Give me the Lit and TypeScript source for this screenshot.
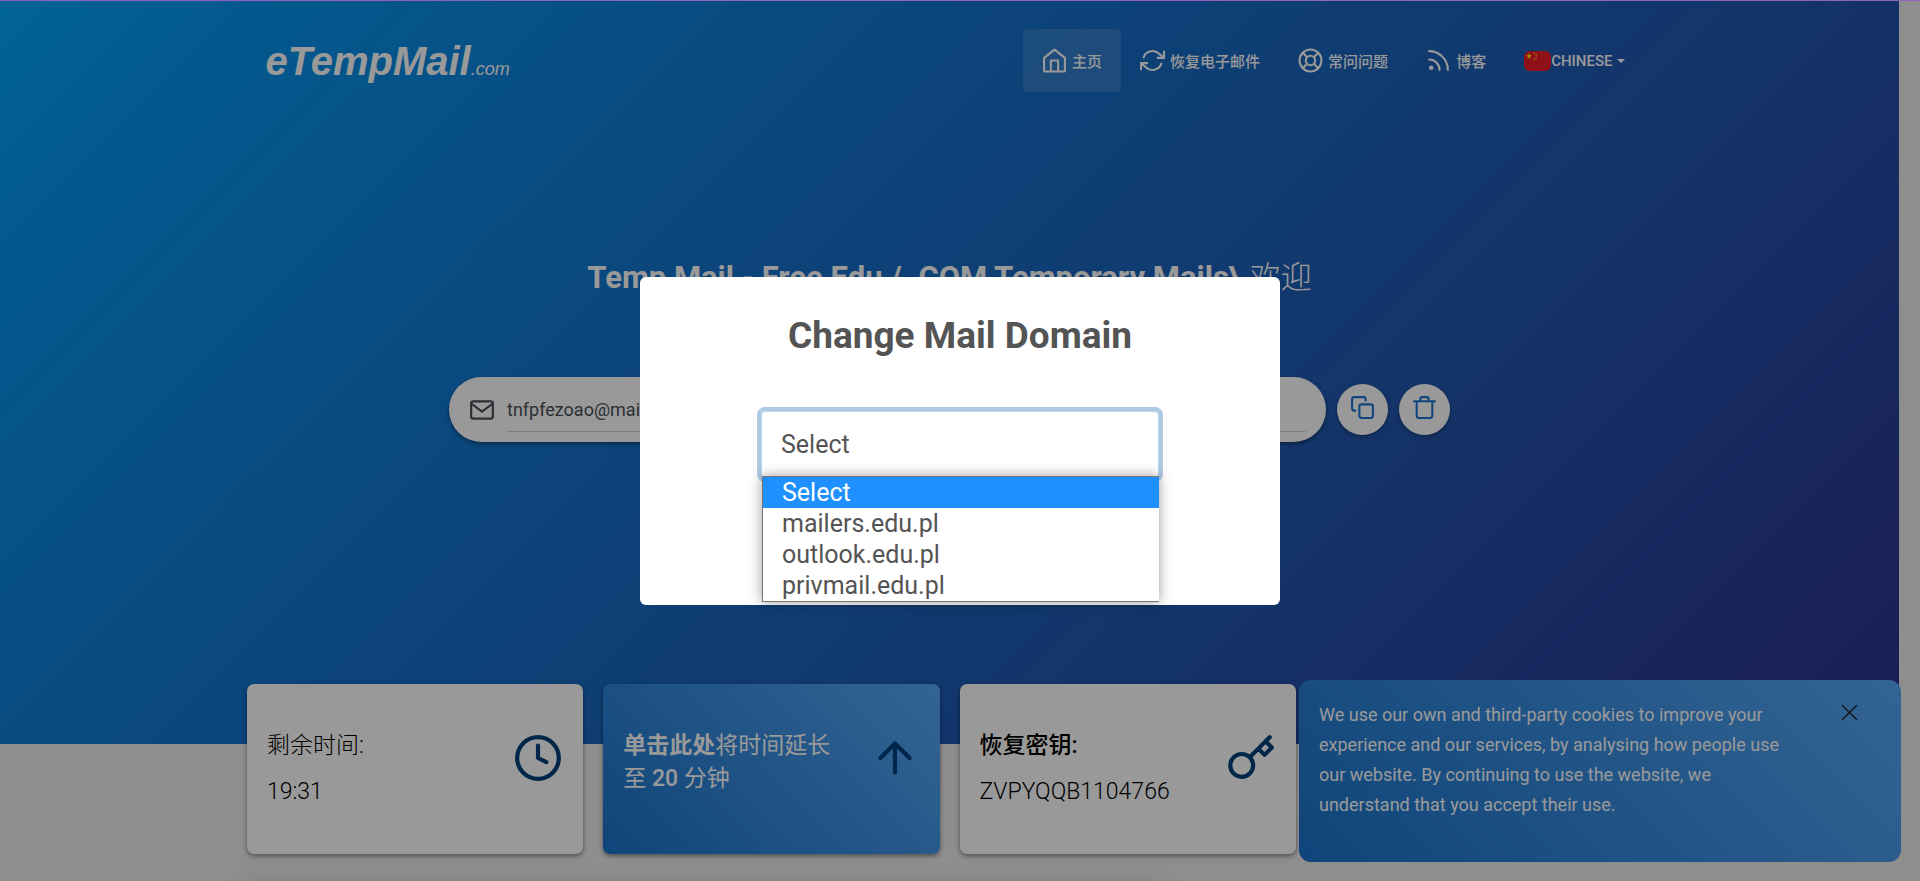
import { LitElement, html, css, svg } from "lit";
import { customElement, state } from "lit/decorators.js";

const icon = (body: unknown, cls: string, viewBox = "0 0 24 24") =>
  html`<svg class="icon ${cls}" viewBox=${viewBox} aria-hidden="true">${body}</svg>`;

const home = svg`<path d="M2 9.500 12 1.500l10 8V21a1.500 1.500 0 0 1-1.500 1.500h-17A1.500 1.500 0 0 1 2 21z"/><path d="M8.500 22.500V12h7v10.500"/>`;
const refresh = svg`<path d="M23 3.500v6h-6M1 20.500v-6h6"/><path d="M3.500 9a9 9 0 0 1 14.900-3.400L23 9.500M1 14.500l4.600 3.900A9 9 0 0 0 20.500 15"/>`;
const buoy = svg`<circle cx="12" cy="12" r="10.500"/><circle cx="12" cy="12" r="4.500"/><path d="m4.600 4.600 4.200 4.200M15.200 15.200l4.200 4.200M15.200 8.800l4.200-4.200M4.600 19.400l4.200-4.200"/>`;
const rss = svg`<path d="M3 11a10 10 0 0 1 10 10M3 3a18 18 0 0 1 18 18"/><circle cx="5" cy="19" r="1.200"/>`;
const mail = svg`<rect x="2" y="4" width="20" height="16" rx="2"/><path d="m2 6 10 7.500L22 6"/>`;
const copy = svg`<rect x="9" y="9" width="13" height="13" rx="2"/><path d="M5 15H4a2 2 0 0 1-2-2V4a2 2 0 0 1 2-2h9a2 2 0 0 1 2 2v1.500"/>`;
const trash = svg`<path d="M2 6h20M19.500 6v14a2 2 0 0 1-2 2h-11a2 2 0 0 1-2-2V6M8 6V4a2 2 0 0 1 2-2h4a2 2 0 0 1 2 2v2"/>`;
const clock = svg`<circle cx="12" cy="12" r="10"/><path d="M12 6v6l4 2"/>`;
const arrow = svg`<path d="M12 19V5M5 12l7-7 7 7"/>`;
const key = svg`<path d="m21 2-2 2m-7.610 7.610a5.500 5.500 0 1 1-7.778 7.778 5.500 5.500 0 0 1 7.777-7.777zm0 0L15.500 7.500m0 0 3 3L22 7l-3-3m-3.500 3.500L19 4"/>`;

@customElement("app-root")
export class AppRoot extends LitElement {
  @state() private domain = "Select";

  private domains = ["Select", "mailers.edu.pl", "outlook.edu.pl", "privmail.edu.pl"];

  static styles = css`
    :host {
      display: block;
      position: relative;
      height: 100vh;
      overflow: hidden;
      background: #ededed;
      font-family: Roboto, "Noto Sans CJK SC", sans-serif;
      font-size: 16px;
      color: #212529;
    }
    *, *::before, *::after { box-sizing: border-box; }
    a { color: inherit; text-decoration: none; }
    button { font: inherit; border: 0; padding: 0; cursor: pointer; }
    h1, h2, p { margin: 0; }
    .icon {
      display: block;
      flex: none;
      fill: none;
      stroke: currentColor;
      stroke-width: 2;
      stroke-linecap: round;
      stroke-linejoin: round;
    }
    .page { padding-right: 21px; }
    .hero {
      height: 744px;
      padding-top: 29px;
      background: linear-gradient(135deg, #00a6fa 0%, #0694ee 10%, #1471cb 39%, #2157af 68%, #2d308c 100%);
    }
    .bar {
      display: flex;
      align-items: center;
      justify-content: space-between;
      width: 1400px;
      max-width: 100%;
      height: 63px;
      margin: 0 auto;
      padding: 0 6px 0 16px;
    }
    .brand {
      color: #fff;
      font-family: "Liberation Sans", sans-serif;
      font-style: italic;
      font-weight: 700;
      font-size: 40px;
      line-height: 60px;
    }
    .brand small { font-size: 18px; line-height: 20px; font-weight: 400; }
    .menu {
      display: flex;
      list-style: none;
      margin: 0;
      padding: 0;
      color: #fff;
      font-size: 15px;
      font-weight: 500;
    }
    .menu a {
      display: flex;
      align-items: center;
      gap: 5px;
      height: 63px;
      padding: 0 19px;
      border-radius: 4px;
    }
    .menu .current { background: rgba(255, 255, 255, 0.12); }
    .menu .lang { gap: 0; }
    .menu-icon { width: 25px; height: 25px; }
    .flag { width: 27px; height: 20px; border-radius: 6px; }
    .caret {
      margin-left: 4px;
      border: 4px solid transparent;
      border-top-color: currentColor;
      border-bottom: 0;
    }
    .title {
      margin-top: 164px;
      text-align: center;
      color: #fff;
      font-size: 31px;
      line-height: 44px;
      font-weight: 700;
    }
    .title span { font-weight: 300; }
    .address {
      display: flex;
      justify-content: center;
      align-items: center;
      gap: 11px;
      margin-top: 77px;
    }
    .field {
      display: flex;
      align-items: center;
      gap: 12px;
      width: 877px;
      height: 65px;
      padding: 0 20px;
      border-radius: 33px;
      background: #fff;
      color: #4a5058;
      box-shadow: 0 2px 4px rgba(0, 0, 0, 0.4);
    }
    .field input {
      flex: 1;
      min-width: 0;
      height: 44px;
      border: 0;
      border-bottom: 1px solid #ced4da;
      padding: 0;
      background: none;
      color: #495057;
      font: 18px/24px Roboto, sans-serif;
      outline: 0;
    }
    .mail-icon { width: 26px; height: 26px; }
    .round {
      display: grid;
      place-items: center;
      width: 51px;
      height: 51px;
      padding-bottom: 5px;
      border-radius: 50%;
      background: #fff;
      color: #1a75cf;
      box-shadow: 0 2px 4px rgba(0, 0, 0, 0.3);
    }
    .tool-icon { width: 25px; height: 25px; }
    .cards {
      display: grid;
      grid-template-columns: repeat(4, 1fr);
      gap: 20px;
      width: 1405px;
      max-width: 100%;
      margin: -60px auto 0;
    }
    .card {
      display: flex;
      justify-content: space-between;
      height: 170px;
      padding: 45px 20px 0;
      border-radius: 7px;
      background: #fff;
      box-shadow: 0 2px 5px rgba(0, 0, 0, 0.45);
      font-size: 23px;
      font-weight: 300;
      line-height: 33px;
      text-align: left;
      color: #000;
    }
    .card p + p { margin-top: 13px; }
    .card.extend {
      background: linear-gradient(45deg, #1a73cc, #56a7f5);
      color: #fff;
      font-weight: 400;
    }
    .card .bold { font-weight: 700; }
    .card .medium { font-weight: 500; }
    .card-icon { width: 50px; height: 50px; margin-top: 4px; color: #00407c; }
    .inbox {
      width: 911px;
      height: 400px;
      margin: 32px 0 0 248px;
      background: #fff;
      box-shadow: 0 0 24px rgba(0, 0, 0, 0.15);
    }
    .shade {
      position: absolute;
      inset: 0;
      background: rgba(0, 0, 0, 0.4);
    }
    .cookies {
      position: absolute;
      right: 19px;
      bottom: 19px;
      display: flex;
      justify-content: space-between;
      align-items: flex-start;
      width: 602px;
      height: 182px;
      padding: 20px 43px 0 20px;
      border-radius: 12px;
      background: linear-gradient(45deg, #1a73cc, #56a7f5);
      color: #fff;
      line-height: 30px;
      font-size: 18px;
    }
    .cookies p { width: 466px; }
    .close { background: none; color: #212529; margin-top: 4px; }
    .close-icon { width: 17px; height: 17px; }
    .dialog {
      position: absolute;
      top: 277px;
      left: 50%;
      width: 640px;
      height: 328px;
      margin-left: -320px;
      border-radius: 6px;
      background: #fff;
      display: flex;
      flex-direction: column;
      align-items: center;
      color: #545454;
    }
    .dialog h2 {
      margin-top: 34px;
      font-size: 37px;
      line-height: 50px;
      font-weight: 700;
    }
    .picker { position: relative; width: 398px; margin-top: 50px; }
    .picker select {
      display: block;
      width: 100%;
      height: 67px;
      padding: 0 19px;
      appearance: none;
      border: 1px solid #b4dbed;
      border-radius: 4px;
      background: #fff;
      color: #545454;
      font: 25px/32px Roboto, sans-serif;
      box-shadow: 0 0 0 4px rgba(100, 150, 200, 0.5);
      outline: 0;
    }
    .options {
      position: absolute;
      left: 1px;
      right: 0;
      top: 65px;
      margin: 0;
      padding: 0;
      list-style: none;
      border: 1px solid #767676;
      border-right: 0;
      background: #fff;
      box-shadow: 0 0 12px rgba(0, 0, 0, 0.4);
      font-size: 25px;
      line-height: 31px;
    }
    .options li { padding-left: 19px; }
    .options .on { background: #1e90ff; color: #fff; }
    .edge { position: absolute; top: 0; left: 0; right: 0; height: 1px; background: #8f65bb; }
  `;

  render() {
    return html`
      <div class="page">
        <header class="hero">
          <nav class="bar">
            <a class="brand" href="#">eTempMail<small>.com</small></a>
            <ul class="menu">
              <li><a class="current" href="#">${icon(home, "menu-icon")}主页</a></li>
              <li><a href="#">${icon(refresh, "menu-icon")}恢复电子邮件</a></li>
              <li><a href="#">${icon(buoy, "menu-icon")}常问问题</a></li>
              <li><a href="#">${icon(rss, "menu-icon")}博客</a></li>
              <li>
                <a class="lang" href="#">
                  <svg class="flag" viewBox="0 0 27 20" aria-hidden="true">
                    <rect width="27" height="20" fill="#ee1c25" />
                    <path fill="#ff0" d="m5 2 .8 2.200h2.200L6.200 5.600l.7 2.200L5 6.500 3.100 7.800l.7-2.200L2 4.200h2.200z" />
                    <path fill="#ff0" d="M9.500 1.500h1.400v1.200H9.500zM11.500 3.500h1.300v1.300h-1.300zM11.500 6h1.300v1.300h-1.300zM9.500 8h1.400v1.200H9.500z" />
                  </svg>CHINESE<span class="caret"></span>
                </a>
              </li>
            </ul>
          </nav>
          <h1 class="title">Temp Mail - Free Edu / .COM Temporary Mails\\ <span>欢迎</span></h1>
          <div class="address">
            <label class="field">
              ${icon(mail, "mail-icon")}
              <input aria-label="Email" readonly .value=${"tnfpfezoao@mailers.edu.pl"} />
            </label>
            <button class="round" aria-label="Copy">${icon(copy, "tool-icon")}</button>
            <button class="round" aria-label="Delete">${icon(trash, "tool-icon")}</button>
          </div>
        </header>
        <main class="cards">
          <section class="card">
            <div><p>剩余时间:</p><p>19:31</p></div>
            ${icon(clock, "card-icon")}
          </section>
          <button class="card extend">
            <span><span class="bold">单击此处</span>将时间延长<br />至 <span class="medium">20</span> 分钟</span>
            ${icon(arrow, "card-icon")}
          </button>
          <section class="card">
            <div><p class="medium">恢复密钥:</p><p>ZVPYQQB1104766</p></div>
            ${icon(key, "card-icon")}
          </section>
        </main>
        <section class="inbox"></section>
      </div>
      <aside class="cookies">
        <p>We use our own and third-party cookies to improve your experience and our services, by analysing how people use our website. By continuing to use the website, we understand that you accept their use.</p>
        <button class="close" aria-label="Close">
          ${icon(svg`<path d="M2 2l20 20M22 2 2 22"/>`, "close-icon")}
        </button>
      </aside>
      <div class="shade"></div>
      <div class="dialog" role="dialog" aria-labelledby="dialog-title">
        <h2 id="dialog-title">Change Mail Domain</h2>
        <div class="picker">
          <select aria-label="Domain">
            ${this.domains.map((d) => html`<option ?selected=${d === this.domain}>${d}</option>`)}
          </select>
          <ul class="options">
            ${this.domains.map(
              (d) => html`<li class=${d === this.domain ? "on" : ""} @click=${() => (this.domain = d)}>${d}</li>`
            )}
          </ul>
        </div>
      </div>
      <div class="edge"></div>
    `;
  }
}
